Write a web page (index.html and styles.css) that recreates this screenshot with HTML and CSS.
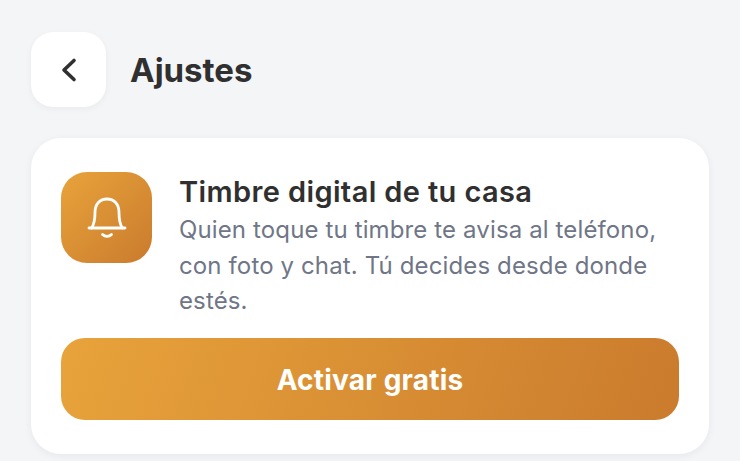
FILE: index.html
```html
<!DOCTYPE html>
<html lang="es">
<head>
    <meta charset="UTF-8">
    <meta name="viewport" content="width=device-width, initial-scale=1.0">
    <title>Ajustes</title>
    <link rel="stylesheet" href="styles.css">
</head>
<body>
    <header class="topbar">
        <button class="back-btn" aria-label="Volver">
            <svg width="30" height="30" viewBox="0 0 30 30" fill="none" stroke="#303030" stroke-width="3.6" stroke-linecap="round" stroke-linejoin="round">
                <path d="M20 5.500 L10 15 L20 24.500"/>
            </svg>
        </button>
        <h1 class="page-title">Ajustes</h1>
    </header>

    <section class="card">
        <div class="card-row">
            <div class="icon-box">
                <svg width="40" height="42" viewBox="0 0 40 42" fill="none" stroke="#fff" stroke-width="2.800" stroke-linecap="round" stroke-linejoin="round">
                    <path d="M2 31 H38"/>
                    <path d="M4.500 31 C7.500 27 8 23 8 15.500 C8 7 13 2 20 2 C27 2 32 7 32 15.500 C32 23 32.500 27 35.500 31"/>
                    <path d="M15.500 37.500 C18 40 22 40 24.500 37.500"/>
                </svg>
            </div>
            <div class="card-text">
                <h2 class="card-title">Timbre digital de tu casa</h2>
                <p class="card-desc">Quien toque tu timbre te avisa al teléfono, con foto y chat. Tú decides desde donde estés.</p>
            </div>
        </div>
        <button class="cta">Activar gratis</button>
    </section>
</body>
</html>
```

FILE: styles.css
```css
:root {
    --bg-color: #f4f5f7;
    --text-color: #303030;
    --muted: #6f7687;
    --amber-start: #e8a33b;
    --amber-end: #ca7b2d;
}
html, body {
    height: 100%;
}
body {
    font-family: 'Inter', sans-serif;
    margin: 0;
    padding: 32px 31px 0;
    box-sizing: border-box;
    background: var(--bg-color);
    color: var(--text-color);
    overflow: hidden;
}
.topbar {
    display: flex;
    align-items: center;
    gap: 24px;
    margin-bottom: 31px;
}
.back-btn {
    width: 75px;
    height: 75px;
    padding: 0;
    border: none;
    border-radius: 22px;
    background: #fff;
    box-shadow: 0 2px 6px rgba(30, 40, 60, 0.05);
    display: flex;
    align-items: center;
    justify-content: center;
}
.page-title {
    margin: 0;
    font-size: 33px;
    font-weight: 700;
    line-height: 40px;
    padding-top: 1px;
}
.card {
    background: #fff;
    border-radius: 30px;
    padding: 34px 30px 34px;
    box-shadow: 0 2px 8px rgba(30, 40, 60, 0.06);
}
.card-row {
    display: flex;
    align-items: flex-start;
    gap: 27px;
    margin-bottom: 19px;
}
.icon-box {
    flex: none;
    width: 91px;
    height: 91px;
    border-radius: 26px;
    background: linear-gradient(135deg, var(--amber-start), var(--amber-end));
    display: flex;
    align-items: center;
    justify-content: center;
}
.card-title {
    margin: 0;
    font-size: 29px;
    font-weight: 600;
    line-height: 40px;
    letter-spacing: 0.38px;
}
.card-desc {
    margin: 0;
    font-size: 24px;
    line-height: 35.500px;
    color: var(--muted);
    letter-spacing: 0.13px;
}
.cta {
    display: block;
    width: 100%;
    height: 82px;
    padding: 2px 0 0;
    border: none;
    border-radius: 24px;
    background: linear-gradient(110deg, var(--amber-start), var(--amber-end));
    color: #fff;
    font-family: inherit;
    font-size: 28px;
    font-weight: 700;
    letter-spacing: 0.2px;
}
```
